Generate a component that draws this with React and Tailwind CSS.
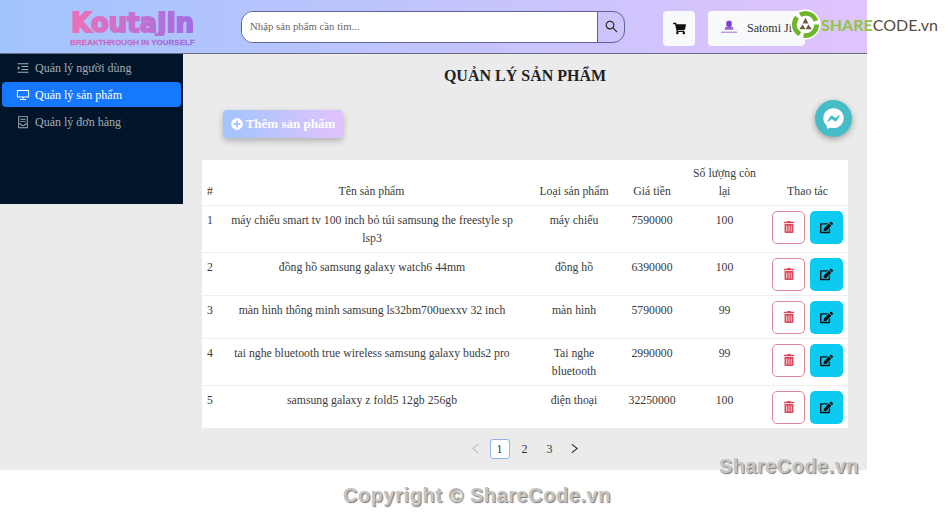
import React from "react";
import { AiOutlineDesktop, AiOutlineSearch, AiOutlineMenuUnfold, AiOutlineLeft, AiOutlineRight, AiOutlineContainer } from "react-icons/ai";
import { FaTrashAlt, FaEdit, FaShoppingCart, FaPlusCircle, FaFacebookMessenger } from "react-icons/fa";

const rows = [
  { id: 1, name: "máy chiếu smart tv 100 inch bỏ túi samsung the freestyle sp lsp3", type: "máy chiếu", price: "7590000", qty: "100", h: "h-[47px]" },
  { id: 2, name: "đồng hồ samsung galaxy watch6 44mm", type: "đồng hồ", price: "6390000", qty: "100", h: "h-[43px]" },
  { id: 3, name: "màn hình thông minh samsung ls32bm700uexxv 32 inch", type: "màn hình", price: "5790000", qty: "99", h: "h-[43px]" },
  { id: 4, name: "tai nghe bluetooth true wireless samsung galaxy buds2 pro", type: "Tai nghe bluetooth", price: "2990000", qty: "99", h: "h-[47px]" },
  { id: 5, name: "samsung galaxy z fold5 12gb 256gb", type: "điện thoại", price: "32250000", qty: "100", h: "h-[43px]" },
];

const menu = [
  { label: "Quản lý người dùng", Icon: AiOutlineMenuUnfold },
  { label: "Quản lý sản phẩm", Icon: AiOutlineDesktop, active: true },
  { label: "Quản lý đơn hàng", Icon: AiOutlineContainer },
];

function Logo() {
  return (
    <div className="flex flex-col items-start w-[127px]">
      <span className="text-[26px] leading-[25px] font-bold bg-gradient-to-r from-[#ee6fb4] to-[#9f6ce6] bg-clip-text text-transparent font-['DejaVu_Sans',sans-serif] [-webkit-text-stroke:2px_transparent] px-[1px]">KoutaJin</span>
      <span className="mt-[2px] text-[8px] leading-[9px] font-bold whitespace-nowrap bg-gradient-to-r from-[#d868b8] to-[#9a6ae0] bg-clip-text text-transparent font-['Liberation_Sans',sans-serif] [-webkit-text-stroke:0.3px_transparent]">BREAKTHROUGH IN YOURSELF</span>
    </div>
  );
}

export default function App() {
  return (
    <div className="relative w-[950px] h-[522px] overflow-hidden bg-white font-['Liberation_Serif',serif] text-[12px] text-[#333]">
      <div className="w-[867px] h-[470px] bg-[#ebebeb] flex flex-col">
        <header className="h-[54px] shrink-0 flex items-center border-b border-[#6b6b80] bg-gradient-to-r from-[#a1c4fd] to-[#e0c3fc]">
          <div className="ml-[70px] mt-[5px]"><Logo /></div>
          <div className="ml-[44px] w-[384px] h-[32px] flex rounded-[12px] border border-[#5f6390] overflow-hidden">
            <div className="flex-1 bg-white flex items-center pl-[8px] text-[10.75px] text-[#666]">Nhập sản phẩm cần tìm...</div>
            <div className="w-[27px] flex items-center justify-center border-l border-[#5f6390]"><AiOutlineSearch className="text-[15px] text-[#222]" /></div>
          </div>
          <div className="ml-[38px] w-[32px] h-[35px] rounded-[4px] bg-[#f8f9fa] flex items-center justify-center mt-[3px]"><FaShoppingCart className="text-[13px] text-[#111]" /></div>
          <div className="ml-[13px] w-[97px] h-[35px] rounded-[4px] bg-[#f8f9fa] flex items-center mt-[3px] overflow-hidden">
            <svg viewBox="0 0 24 20" className="ml-[10px] w-[22px] h-[18px]">
              <rect x="9" y="2" width="6" height="7" rx="2" fill="#7a3fd0" />
              <path d="M8 9h8l1 3H7z" fill="#9a5be0" />
              <rect x="3" y="14" width="18" height="1.5" fill="#8a55c8" opacity=".6" />
            </svg>
            <span className="ml-[7px] text-[12px] text-[#333] whitespace-nowrap">Satomi Jin</span>
          </div>
        </header>
        <div className="flex flex-1 min-h-0">
          <aside className="w-[183px] h-[150px] bg-[#001529] shrink-0 pt-[1px] px-[2px]">
            {menu.map(({ label, Icon, active }) => (
              <div key={label} className={`h-[25px] mb-[2px] rounded-[4px] flex items-center pl-[14px] gap-[5px] text-[12px] ${active ? "bg-[#1677ff] text-white" : "text-[#ffffffa6]"}`}>
                <Icon className="text-[14px]" />
                <span>{label}</span>
              </div>
            ))}
          </aside>
          <main className="relative flex-1 flex flex-col pl-[19px] pr-[20px]">
            <h1 className="mt-[12px] text-center text-[16px] leading-[20px] font-bold text-[#222]">QUẢN LÝ SẢN PHẨM</h1>
            <div className="mt-[24px] ml-[21px]">
              <button className="w-[120px] h-[28px] rounded-[4px] flex items-center justify-center gap-[3px] bg-gradient-to-r from-[#a1c4fd] to-[#e0c3fc] text-white font-bold text-[13px] shadow-[0_3px_6px_rgba(0,0,0,0.25)]">
                <FaPlusCircle className="text-[12px]" />Thêm sản phẩm
              </button>
            </div>
            <div className="absolute right-[16px] top-[46px] w-[37px] h-[37px] rounded-full bg-[#46bdc6] flex items-center justify-center shadow-[0_2px_6px_rgba(0,0,0,0.35)]">
              <FaFacebookMessenger className="text-[21px] text-white" />
            </div>
            <table className="mt-[22px] w-[646px] table-fixed border-collapse bg-white text-[11.75px] leading-[18px] text-[#3a3a3a]">
              <colgroup>
                <col className="w-[20px]" /><col className="w-[308px]" /><col className="w-[88px]" /><col className="w-[68px]" /><col className="w-[77px]" /><col className="w-[85px]" />
              </colgroup>
              <thead>
                <tr className="h-[45px] border-b border-[#eee] align-bottom">
                  <th className="font-normal text-left pl-[5px] pb-[4px]">#</th>
                  <th className="font-normal text-center pb-[4px] pr-[9px]">Tên sản phẩm</th>
                  <th className="font-normal text-center pb-[4px]">Loại sản phẩm</th>
                  <th className="font-normal text-center pb-[4px]">Giá tiền</th>
                  <th className="font-normal text-center pb-[4px] px-[5px]">Số lượng còn lại</th>
                  <th className="font-normal text-center pb-[4px] pl-[4px]">Thao tác</th>
                </tr>
              </thead>
              <tbody>
                {rows.map((r) => (
                  <tr key={r.id} className={`${r.h} border-b border-[#eee] align-top`}>
                    <td className="pl-[5px] pt-[6px]">{r.id}</td>
                    <td className="text-center pt-[6px] pl-[2px] pr-[10px]">{r.name}</td>
                    <td className="text-center pt-[6px] px-[15px]">{r.type}</td>
                    <td className="text-center pt-[6px]">{r.price}</td>
                    <td className="text-center pt-[6px]">{r.qty}</td>
                    <td className="pt-[5px]">
                      <div className="flex gap-[5px] pl-[9px]">
                        <div className="w-[33px] h-[33px] rounded-[5px] border border-[#dc8a9a] flex items-center justify-center"><FaTrashAlt className="text-[12px] text-[#dc4a5c]" /></div>
                        <div className="w-[33px] h-[33px] rounded-[5px] bg-[#0dcaf0] flex items-center justify-center"><FaEdit className="text-[13px] text-[#111]" /></div>
                      </div>
                    </td>
                  </tr>
                ))}
              </tbody>
            </table>
            <div className="mt-[10px] flex items-center justify-center gap-[5px] pr-[1px] h-[20px] text-[12px]">
              <span className="w-[19px] flex justify-center text-[#bbb]"><AiOutlineLeft className="text-[13px]" /></span>
              <span className="w-[20px] h-[20px] rounded-[3px] border border-[#91b4e8] bg-white flex items-center justify-center">1</span>
              <span className="w-[20px] flex justify-center">2</span>
              <span className="w-[20px] flex justify-center">3</span>
              <span className="w-[19px] flex justify-center text-[#222]"><AiOutlineRight className="text-[13px]" /></span>
            </div>
          </main>
        </div>
      </div>

      <div className="absolute left-[790px] top-[9px] flex items-center">
        <svg viewBox="0 0 32 32" className="w-[31px] h-[31px]">
          <circle cx="16" cy="16" r="15.5" fill="#fff" />
          <circle cx="16" cy="16" r="11.5" fill="none" stroke="#6fb52c" strokeWidth="5" strokeDasharray="20 4" />
          <path d="M16 9l3 6h-6zM9.5 21l3.5-5 3 5zM22.5 21l-3.5-5-3 5z" fill="#6b5a3e" />
        </svg>
        <span className="text-[16px] leading-[22px] font-['Lato',sans-serif] whitespace-nowrap">
          <span className="font-bold text-[#8cc63f]">SHARE</span><span className="text-[#5a4a36]">CODE.vn</span>
        </span>
      </div>
      <div className="absolute left-[719px] top-[454px] text-[20px] leading-[24px] tracking-[0.45px] font-bold text-[#c4c4c4] font-['Liberation_Sans',sans-serif] [text-shadow:1px_1px_1px_#777]">ShareCode.vn</div>
      <div className="absolute left-[343px] top-[483px] text-[20px] leading-[24px] tracking-[0.55px] font-bold text-[#c4c4c4] font-['Liberation_Sans',sans-serif] [text-shadow:1px_1px_1px_#777]">Copyright © ShareCode.vn</div>
    </div>
  );
}
